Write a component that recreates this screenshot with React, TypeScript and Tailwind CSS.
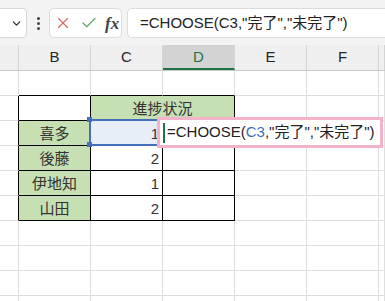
import React from 'react';
import { ChevronDown, X, Check } from 'lucide-react';

const FONT = "font-['Liberation_Sans','Noto_Sans_CJK_JP',sans-serif]";

type Cell = {
  text?: string;
  align?: 'left' | 'center' | 'right';
  fill?: string;
  bR?: boolean;
  bB?: boolean;
  w?: string;
};

const widths = ['w-[19px]', 'w-[72px]', 'w-[72px]', 'w-[72px]', 'w-[72px]', 'w-[72px]', 'flex-1'];

// rows of the sheet, cols A..G (A and G are clipped)
const rows: Cell[][] = [
  // row 1
  [{}, { bB: true }, { bB: true }, { bB: true }, {}, {}, {}],
  // row 2 (C:D merged)
  [
    { bR: true },
    { bR: true, bB: true },
    { text: '進捗状況', align: 'center', fill: 'bg-[#c6e0b4]', bR: true, bB: true, w: 'w-[144px]' },
    { w: 'w-[72px]' },
    { w: 'w-[72px]' },
    { w: 'flex-1' },
  ],
  [{ bR: true }, { text: '喜多', align: 'center', fill: 'bg-[#c6e0b4]', bR: true, bB: true }, { text: '1', align: 'right', fill: 'bg-[#e8eef8]', bR: true, bB: true }, { bR: true, bB: true }, {}, {}, {}],
  [{ bR: true }, { text: '後藤', align: 'center', fill: 'bg-[#c6e0b4]', bR: true, bB: true }, { text: '2', align: 'right', bR: true, bB: true }, { bR: true, bB: true }, {}, {}, {}],
  [{ bR: true }, { text: '伊地知', align: 'center', fill: 'bg-[#c6e0b4]', bR: true, bB: true }, { text: '1', align: 'right', bR: true, bB: true }, { bR: true, bB: true }, {}, {}, {}],
  [{ bR: true }, { text: '山田', align: 'center', fill: 'bg-[#c6e0b4]', bR: true, bB: true }, { text: '2', align: 'right', bR: true, bB: true }, { bR: true, bB: true }, {}, {}, {}],
  [{}, {}, {}, {}, {}, {}, {}],
  [{}, {}, {}, {}, {}, {}, {}],
  [{}, {}, {}, {}, {}, {}, {}],
  [{}, {}, {}, {}, {}, {}, {}],
];

function Formula() {
  return (
    <>
      =CHOOSE(<span className="text-[#3e6fbf]">C3</span>,"完了","未完了")
    </>
  );
}

function Toolbar() {
  return (
    <div className="h-[45px] bg-[#f3f3f3] flex items-center pt-[1px]">
      <div className="w-[27px] h-[30px] shrink-0 bg-white border border-l-0 border-[#d6d6d6] rounded-r-[5px] flex items-center justify-end pr-[3px]">
        <ChevronDown size={13} strokeWidth={2.5} className="text-[#333]" />
      </div>
      <div className="w-[22px] shrink-0 flex flex-col items-center gap-[2px]">
        <span className="w-[3px] h-[3px] rounded-full bg-[#444]" />
        <span className="w-[3px] h-[3px] rounded-full bg-[#444]" />
        <span className="w-[3px] h-[3px] rounded-full bg-[#444]" />
      </div>
      <div className="w-[73px] h-[30px] shrink-0 bg-white border border-[#dcdcdc] rounded-[5px] flex items-center pl-[4px]">
        <X size={18} strokeWidth={1.6} className="text-[#dd6b6b]" />
        <Check size={18} strokeWidth={1.6} className="text-[#5fa86b] ml-[8px]" />
        <span className="ml-[7px] font-['Liberation_Serif',serif] italic font-bold text-[17px] text-[#444] leading-none">fx</span>
      </div>
      <div className={`ml-[5px] flex-1 h-[30px] bg-white border border-[#dcdcdc] rounded-l-[5px] border-r-0 flex items-center pl-[12px] text-[15px] text-[#222] whitespace-nowrap ${FONT}`}>
        =CHOOSE(C3,"完了","未完了")
      </div>
    </div>
  );
}

function Header() {
  const labels = ['', 'B', 'C', 'D', 'E', 'F', ''];
  return (
    <div className="flex h-[26px] bg-[#efefef] border-b border-[#c8c8c8]">
      {labels.map((l, i) =>
        l === 'D' ? (
          <div key={i} className={`${widths[i]} shrink-0 bg-[#d3d3d3] border-r border-[#d4d4d4] border-b-2 border-b-[#217346] flex items-center justify-center text-[15px] text-[#217346] pt-[1px]`}>
            {l}
          </div>
        ) : (
          <div key={i} className={`${widths[i]} shrink-0 border-r border-[#d4d4d4] flex items-center justify-center text-[15px] text-[#262626]`}>
            {l}
          </div>
        ),
      )}
    </div>
  );
}

export default function App() {
  return (
    <div className={`w-[385px] h-[301px] overflow-hidden bg-white relative ${FONT}`}>
      <Toolbar />
      <Header />
      <div>
        {rows.map((r, ri) => (
          <div key={ri} className="flex h-[25px]">
            {r.map((c, ci) => {
              const w = c.w ?? widths[ci];
              const align =
                c.align === 'center' ? 'justify-center' : c.align === 'right' ? 'justify-end pr-[3px]' : 'justify-start';
              return (
                <div
                  key={ci}
                  className={`${w} shrink-0 ${c.fill ?? 'bg-white'} flex items-center ${align} border-r border-b ${
                    c.bR ? 'border-r-black' : 'border-r-[#dedede]'
                  } ${c.bB ? 'border-b-black' : 'border-b-[#dedede]'} text-[15px] text-[#333] leading-none`}
                >
                  {c.text}
                </div>
              );
            })}
          </div>
        ))}
      </div>

      {/* C3 reference highlight */}
      <div className="absolute left-[89px] top-[119px] w-[74px] h-[27px] border-2 border-[#4270bd] pointer-events-none" />
      <span className="absolute left-[87px] top-[117px] w-[5px] h-[5px] bg-[#4270bd]" />
      <span className="absolute left-[87px] top-[142px] w-[5px] h-[5px] bg-[#4270bd]" />
      <span className="absolute left-[160px] top-[118px] w-[5px] h-[5px] bg-[#4270bd]" />

      {/* in-cell editor */}
      <div className="absolute left-[157px] top-[117px] w-[226px] h-[31px] border-[3px] border-[#f4b3ca] bg-white flex items-center pl-[3px] text-[15px] text-[#222] whitespace-nowrap">
        <span className="w-[2px] h-[20px] bg-[#217346] mr-[2px]" />
        <Formula />
      </div>
    </div>
  );
}
